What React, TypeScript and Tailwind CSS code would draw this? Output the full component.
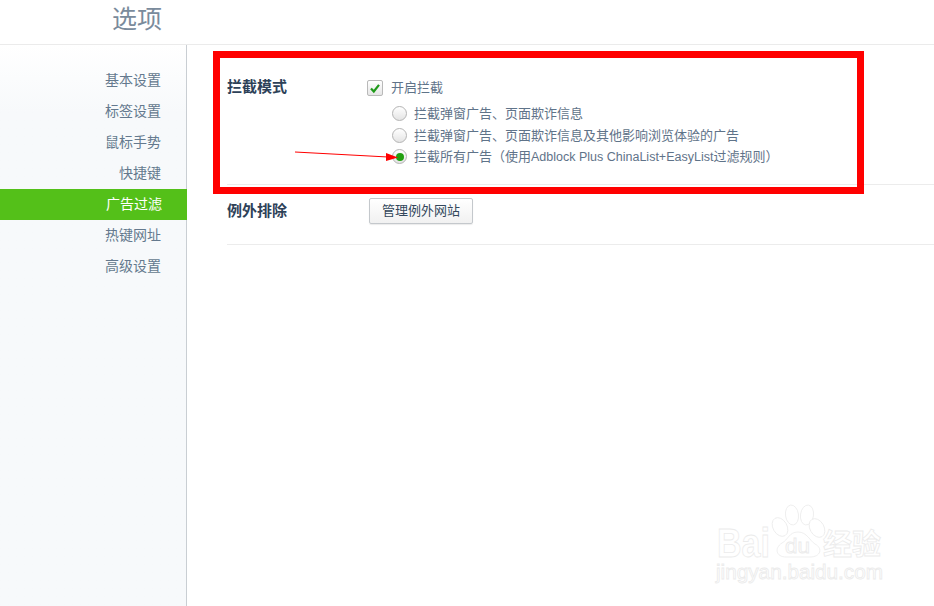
import React from "react";

const font = { fontFamily: '"Liberation Sans", "Noto Sans CJK SC", sans-serif' };
const nav = ["基本设置", "标签设置", "鼠标手势", "快捷键", "广告过滤", "热键网址", "高级设置"];

function Radio({ on, children }: { on?: boolean; children: React.ReactNode }) {
  return (
    <div className="flex h-[21.5px] items-center">
      <span className="flex h-[15px] w-[15px] items-center justify-center rounded-full border border-[#b4b4b4] bg-gradient-to-b from-[#ffffff] to-[#e4e4e4]">
        {on && <span className="h-[8px] w-[8px] rounded-full bg-[#22a011]" />}
      </span>
      <span className="ml-[7px] whitespace-nowrap text-[13px] text-[#5f7389]">{children}</span>
    </div>
  );
}

export default function App() {
  return (
    <div style={font} className="relative h-[606px] w-[934px] overflow-hidden bg-white">
      <header className="h-[45px] border-b border-[#ebebeb] pl-[112px]">
        <h1 className="text-[25px] leading-[38px] font-normal text-[#7a8b9c]">选项</h1>
      </header>
      <div className="flex h-[561px]">
        <nav className="h-full w-[187px] shrink-0 border-r border-[#c9ced3] bg-gradient-to-b from-[#ffffff] from-0% to-[#f7f9fb] to-[12%] pt-[20px]">
          {nav.map((n, i) => (
            <div
              key={n}
              className={
                i === 4
                  ? "mr-[-1px] h-[31px] bg-[#54c019] pr-[25px] text-right text-[14px] leading-[30px] text-white"
                  : "h-[31px] pr-[25px] text-right text-[14px] leading-[30px] text-[#64798e]"
              }
            >
              {n}
            </div>
          ))}
        </nav>
        <main className="flex-1 pl-[40px]">
          <section className="flex h-[140px] border-b border-[#ececec] pt-[32px]">
            <div className="w-[140px] text-[15px] leading-[20px] font-bold text-[#2d4158]">拦截模式</div>
            <div className="flex-1">
              <div className="flex h-[22px] items-center">
                <span className="flex h-[16px] w-[16px] items-center justify-center rounded-[2px] border border-[#b9b9b9] bg-gradient-to-b from-[#ffffff] to-[#e6e6e6]">
                  <svg width="12" height="12" viewBox="0 0 12 12" fill="none">
                    <path d="M2 6.5 L4.8 9.5 L10 2.8" stroke="#1f9a1a" strokeWidth="2.2" />
                  </svg>
                </span>
                <span className="ml-[8px] text-[13px] text-[#5f7389]">开启拦截</span>
              </div>
              <div className="mt-[4px] ml-[25px] flex flex-col">
                <Radio>拦截弹窗广告、页面欺诈信息</Radio>
                <Radio>拦截弹窗广告、页面欺诈信息及其他影响浏览体验的广告</Radio>
                <Radio on>
                  拦截所有广告（使用<span className="text-[12.5px]">Adblock Plus ChinaList+EasyList</span>过滤规则）
                </Radio>
              </div>
            </div>
          </section>
          <section className="flex h-[60px] border-b border-[#ececec] pt-[13px]">
            <div className="w-[142px] text-[15px] leading-[26px] font-bold text-[#2d4158]">例外排除</div>
            <button className="h-[26px] w-[104px] rounded-[2px] border border-[#c4c8cc] bg-gradient-to-b from-[#ffffff] to-[#f1f1f1] text-[13px] text-[#33475b] shadow-[0_1px_1px_rgba(0,0,0,0.08)]">
              管理例外网站
            </button>
          </section>
        </main>
      </div>

      {/* red annotation */}
      <div className="absolute left-[213px] top-[51px] h-[143px] w-[651px] border-[7px] border-[#ff0000]" />
      <svg className="absolute left-[290px] top-[145px]" width="115" height="20" viewBox="0 0 115 20" fill="none">
        <path d="M5 7 L98 12" stroke="#ff0000" strokeWidth="1" />
        <path d="M96 8 L108 12.5 L96 16 Z" fill="#ff0000" />
      </svg>

      {/* watermark */}
      <svg className="absolute left-[710px] top-[500px]" width="190" height="95" viewBox="0 0 190 95" fill="white" stroke="#ebebeb" strokeWidth="0.8">
        <ellipse cx="70" cy="27" rx="7" ry="10" transform="rotate(-30 70 27)" />
        <ellipse cx="82" cy="15" rx="6.5" ry="10" transform="rotate(-8 82 15)" />
        <ellipse cx="97" cy="15" rx="6.5" ry="10" transform="rotate(8 97 15)" />
        <ellipse cx="107" cy="28" rx="7" ry="10" transform="rotate(-30 107 28)" />
        <path d="M88 32 C97 32 100 41 105 44 C113 48 111 57 100 57 L76 57 C66 57 64 48 72 43 C78 40 79 32 88 32 Z" />
        <text x="7" y="57" fontSize="40" fontFamily="Liberation Sans, sans-serif" fontWeight="700" textLength="53" lengthAdjust="spacingAndGlyphs">Bai</text>
        <text x="75" y="53" fontSize="20" fontFamily="Liberation Sans, sans-serif" textLength="25" lengthAdjust="spacingAndGlyphs">du</text>
        <text x="113" y="55" fontSize="29" fontFamily="Noto Sans CJK SC, sans-serif" fontWeight="700">经验</text>
        <text x="6" y="79" fontSize="20" fontFamily="Liberation Sans, sans-serif" textLength="167" lengthAdjust="spacingAndGlyphs">jingyan.baidu.com</text>
      </svg>
    </div>
  );
}
